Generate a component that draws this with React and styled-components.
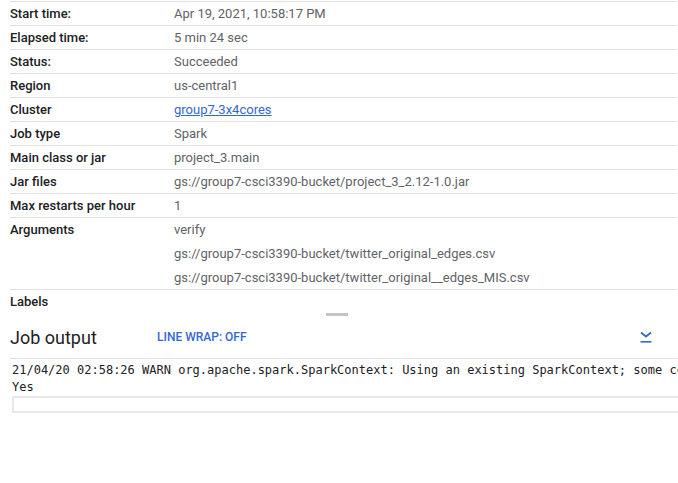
import React from "react";
import styled, { createGlobalStyle } from "styled-components";

const GlobalStyle = createGlobalStyle`
  html, body {
    margin: 0;
    padding: 0;
    background: #fff;
    overflow: hidden;
  }
  body {
    font-family: Roboto, "Liberation Sans", Arial, sans-serif;
    -webkit-font-smoothing: antialiased;
  }
`;

const Page = styled.main`
  width: 678px;
  padding-top: 1px;
  overflow: hidden;
`;

const Details = styled.div`
  margin-left: 10px;
  margin-right: 1px;
`;

const Row = styled.div`
  display: flex;
  border-top: ${(p) => (p.$noBorder ? "none" : "1px solid #e0e0e0")};
  font-size: 13px;
  line-height: 23px;
`;

const Label = styled.div`
  width: 164px;
  flex-shrink: 0;
  font-weight: 500;
  color: #202124;
`;

const Values = styled.div`
  display: flex;
  flex-direction: column;
  color: #5f6368;
`;

const Value = styled.div`
  line-height: ${(p) => (p.$tall ? "24px" : "23px")};
`;

const Link = styled.a`
  color: #3367d6;
  text-decoration: underline;
`;

const HandleRow = styled.div`
  display: flex;
  justify-content: center;
  padding-right: 4px;
`;

const Handle = styled.div`
  width: 22px;
  height: 3px;
  background: #c4c4c4;
`;

const OutputHeader = styled.div`
  display: flex;
  align-items: center;
  height: 42px;
  margin-left: 10px;
  border-bottom: 1px solid #e0e0e0;
  width: 700px;
`;

const OutputTitle = styled.h2`
  margin: 0;
  width: 147px;
  font-size: 18px;
  font-weight: 400;
  color: #202124;
`;

const WrapButton = styled.button`
  border: none;
  background: none;
  padding: 0;
  font-family: inherit;
  font-size: 12px;
  font-weight: 500;
  color: #3367d6;
  text-transform: uppercase;
  cursor: pointer;
`;

const IconButton = styled.button`
  border: none;
  background: none;
  padding: 0;
  margin-left: 393px;
  display: flex;
  cursor: pointer;
`;

const Output = styled.pre`
  margin: 0;
  padding: 3px 0 0 12px;
  font-family: "DejaVu Sans Mono", "Liberation Mono", monospace;
  font-size: 12px;
  line-height: 17px;
  color: #202124;
  white-space: pre;
  overflow: hidden;
`;

const ScrollTrack = styled.div`
  margin: 0 0 0 12px;
  width: 700px;
  height: 13px;
  border: 2px solid #e8e8e8;
  border-right: none;
`;

const args = [
  "verify",
  "gs://group7-csci3390-bucket/twitter_original_edges.csv",
  "gs://group7-csci3390-bucket/twitter_original__edges_MIS.csv",
];

const rows = [
  ["Start time:", "Apr 19, 2021, 10:58:17 PM"],
  ["Elapsed time:", "5 min 24 sec"],
  ["Status:", "Succeeded"],
  ["Region", "us-central1"],
  ["Cluster", <Link href="#">group7-3x4cores</Link>],
  ["Job type", "Spark"],
  ["Main class or jar", "project_3.main"],
  ["Jar files", "gs://group7-csci3390-bucket/project_3_2.12-1.0.jar"],
  ["Max restarts per hour", "1"],
];

export default function App() {
  return (
    <Page>
      <GlobalStyle />
      <Details>
        {rows.map(([label, value]) => (
          <Row key={label}>
            <Label>{label}</Label>
            <Values>
              <Value>{value}</Value>
            </Values>
          </Row>
        ))}
        <Row>
          <Label>Arguments</Label>
          <Values>
            {args.map((a, i) => (
              <Value key={a} $tall={i < 2}>
                {a}
              </Value>
            ))}
          </Values>
        </Row>
        <Row>
          <Label>Labels</Label>
        </Row>
      </Details>
      <HandleRow>
        <Handle />
      </HandleRow>
      <OutputHeader>
        <OutputTitle>Job output</OutputTitle>
        <WrapButton>Line wrap: off</WrapButton>
        <IconButton aria-label="Scroll to bottom">
          <svg width="12" height="12" viewBox="0 0 12 12">
            <polyline
              points="1,1.5 6,5.5 11,1.5"
              fill="none"
              stroke="#3367d6"
              strokeWidth="1.8"
            />
            <rect x="0.5" y="10" width="11" height="1.6" fill="#3367d6" />
          </svg>
        </IconButton>
      </OutputHeader>
      <Output>
        {"21/04/20 02:58:26 WARN org.apache.spark.SparkContext: Using an existing SparkContext; some configuration may not take effect.\nYes"}
      </Output>
      <ScrollTrack />
    </Page>
  );
}
